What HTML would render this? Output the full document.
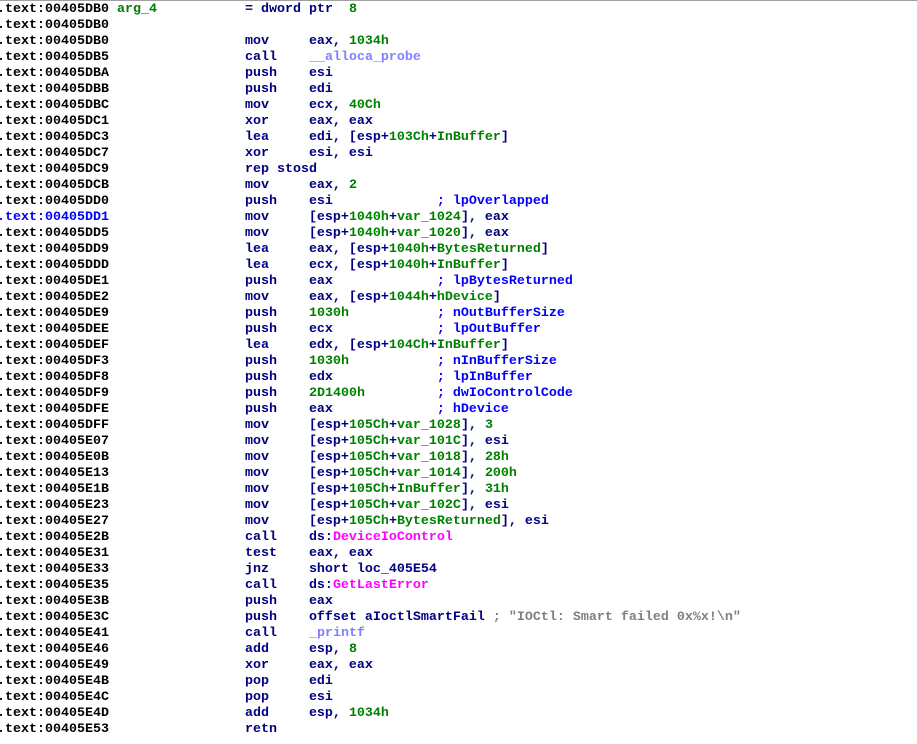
<!DOCTYPE html>
<html><head><meta charset="utf-8"><style>
html,body{margin:0;padding:0;background:#fff;width:917px;height:744px;overflow:hidden}
body{border-top:1px solid #a0a0a0;box-sizing:border-box}
#l{position:absolute;left:-3px;top:2px;font-family:"Liberation Mono",monospace;font-weight:bold;font-size:13.33px;line-height:16px;white-space:pre;color:#000080}
.a{color:#000}.b{color:#0000ff}.g{color:#008000}.c{color:#0000ff}.p{color:#ff00ff}.l{color:#8080ff}.s{color:#808080}
</style></head><body><div id="l"><span class="a">.text:00405DB0</span> <span class="g">arg_4</span>           = dword ptr  <span class="g">8</span>
<span class="a">.text:00405DB0</span>
<span class="a">.text:00405DB0</span>                 mov     eax, <span class="g">1034h</span>
<span class="a">.text:00405DB5</span>                 call    <span class="l">__alloca_probe</span>
<span class="a">.text:00405DBA</span>                 push    esi
<span class="a">.text:00405DBB</span>                 push    edi
<span class="a">.text:00405DBC</span>                 mov     ecx, <span class="g">40Ch</span>
<span class="a">.text:00405DC1</span>                 xor     eax, eax
<span class="a">.text:00405DC3</span>                 lea     edi, [esp+<span class="g">103Ch</span>+<span class="g">InBuffer</span>]
<span class="a">.text:00405DC7</span>                 xor     esi, esi
<span class="a">.text:00405DC9</span>                 rep stosd
<span class="a">.text:00405DCB</span>                 mov     eax, <span class="g">2</span>
<span class="a">.text:00405DD0</span>                 push    esi             <span class="c">; lpOverlapped</span>
<span class="b">.text:00405DD1</span>                 mov     [esp+<span class="g">1040h</span>+<span class="g">var_1024</span>], eax
<span class="a">.text:00405DD5</span>                 mov     [esp+<span class="g">1040h</span>+<span class="g">var_1020</span>], eax
<span class="a">.text:00405DD9</span>                 lea     eax, [esp+<span class="g">1040h</span>+<span class="g">BytesReturned</span>]
<span class="a">.text:00405DDD</span>                 lea     ecx, [esp+<span class="g">1040h</span>+<span class="g">InBuffer</span>]
<span class="a">.text:00405DE1</span>                 push    eax             <span class="c">; lpBytesReturned</span>
<span class="a">.text:00405DE2</span>                 mov     eax, [esp+<span class="g">1044h</span>+<span class="g">hDevice</span>]
<span class="a">.text:00405DE9</span>                 push    <span class="g">1030h</span>           <span class="c">; nOutBufferSize</span>
<span class="a">.text:00405DEE</span>                 push    ecx             <span class="c">; lpOutBuffer</span>
<span class="a">.text:00405DEF</span>                 lea     edx, [esp+<span class="g">104Ch</span>+<span class="g">InBuffer</span>]
<span class="a">.text:00405DF3</span>                 push    <span class="g">1030h</span>           <span class="c">; nInBufferSize</span>
<span class="a">.text:00405DF8</span>                 push    edx             <span class="c">; lpInBuffer</span>
<span class="a">.text:00405DF9</span>                 push    <span class="g">2D1400h</span>         <span class="c">; dwIoControlCode</span>
<span class="a">.text:00405DFE</span>                 push    eax             <span class="c">; hDevice</span>
<span class="a">.text:00405DFF</span>                 mov     [esp+<span class="g">105Ch</span>+<span class="g">var_1028</span>], <span class="g">3</span>
<span class="a">.text:00405E07</span>                 mov     [esp+<span class="g">105Ch</span>+<span class="g">var_101C</span>], esi
<span class="a">.text:00405E0B</span>                 mov     [esp+<span class="g">105Ch</span>+<span class="g">var_1018</span>], <span class="g">28h</span>
<span class="a">.text:00405E13</span>                 mov     [esp+<span class="g">105Ch</span>+<span class="g">var_1014</span>], <span class="g">200h</span>
<span class="a">.text:00405E1B</span>                 mov     [esp+<span class="g">105Ch</span>+<span class="g">InBuffer</span>], <span class="g">31h</span>
<span class="a">.text:00405E23</span>                 mov     [esp+<span class="g">105Ch</span>+<span class="g">var_102C</span>], esi
<span class="a">.text:00405E27</span>                 mov     [esp+<span class="g">105Ch</span>+<span class="g">BytesReturned</span>], esi
<span class="a">.text:00405E2B</span>                 call    ds:<span class="p">DeviceIoControl</span>
<span class="a">.text:00405E31</span>                 test    eax, eax
<span class="a">.text:00405E33</span>                 jnz     short loc_405E54
<span class="a">.text:00405E35</span>                 call    ds:<span class="p">GetLastError</span>
<span class="a">.text:00405E3B</span>                 push    eax
<span class="a">.text:00405E3C</span>                 push    offset aIoctlSmartFail <span class="s">; "IOCtl: Smart failed 0x%x!\n"</span>
<span class="a">.text:00405E41</span>                 call    <span class="l">_printf</span>
<span class="a">.text:00405E46</span>                 add     esp, <span class="g">8</span>
<span class="a">.text:00405E49</span>                 xor     eax, eax
<span class="a">.text:00405E4B</span>                 pop     edi
<span class="a">.text:00405E4C</span>                 pop     esi
<span class="a">.text:00405E4D</span>                 add     esp, <span class="g">1034h</span>
<span class="a">.text:00405E53</span>                 retn</div></body></html>
